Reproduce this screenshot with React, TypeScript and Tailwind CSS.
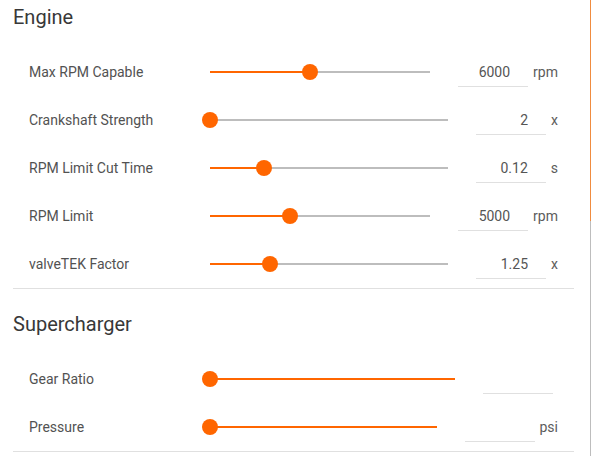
import React from "react";

interface SliderRowProps {
  label: string;
  value: string;
  unit?: string;
  pct: number;
  fullTrack?: boolean;
}

const SliderRow = ({ label, value, unit, pct, fullTrack }: SliderRowProps) => {
  return (
    <div className="flex h-12 items-center pl-4 pr-4">
      <div className="w-[181px] shrink-0 text-sm text-[#525252]">{label}</div>
      <div className="relative flex h-4 flex-1 items-center">
        <div className="flex h-[2px] w-full">
          {fullTrack ? (
            <div className="h-full w-full bg-[#ff6600]" />
          ) : (
            <>
              <div className="h-full bg-[#ff6600]" style={{ width: `${pct}%` }} />
              <div className="h-full flex-1 bg-[#bdbdbd]" />
            </>
          )}
        </div>
        <div
          className="absolute top-0 -ml-2 h-4 w-4 rounded-full bg-[#ff6600]"
          style={{ left: `${pct}%` }}
        />
      </div>
      <input
        readOnly
        value={value}
        className="ml-7 h-[29px] w-[70px] shrink-0 border-b border-[#e0e0e0] bg-transparent pr-[18px] text-right text-sm text-[#555555] outline-none"
      />
      <span className="ml-[5px] text-sm text-[#5c5c5c]">{unit}</span>
    </div>
  );
};

export default function App() {
  return (
    <div
      className="flex h-[456px] w-[591px] overflow-hidden bg-white"
      style={{ fontFamily: "Roboto, 'Liberation Sans', sans-serif" }}
    >
      <div className="w-[590px]">
        <section className="ml-[13px] w-[561px] border-b border-[#e0e0e0]">
          <h2 className="h-12 pt-[3px] text-xl leading-7 text-[#383838]">Engine</h2>
          <SliderRow label="Max RPM Capable" value="6000" unit="rpm" pct={45.5} />
          <SliderRow label="Crankshaft Strength" value="2" unit="x" pct={0} />
          <SliderRow label="RPM Limit Cut Time" value="0.12" unit="s" pct={22.7} />
          <SliderRow label="RPM Limit" value="5000" unit="rpm" pct={36.4} />
          <SliderRow label="valveTEK Factor" value="1.25" unit="x" pct={25.2} />
        </section>
        <section className="ml-[13px] w-[561px] border-b border-[#e0e0e0] pt-[18px]">
          <h2 className="h-12 pt-[3px] text-xl leading-7 text-[#383838]">Supercharger</h2>
          <SliderRow label="Gear Ratio" value="" pct={0} fullTrack />
          <SliderRow label="Pressure" value="" unit="psi" pct={0} fullTrack />
        </section>
      </div>
      <div className="flex w-px flex-col">
        <div className="h-[221px] bg-[#f08c40]" />
        <div className="flex-1 bg-[#bdbdbd]" />
      </div>
    </div>
  );
}
